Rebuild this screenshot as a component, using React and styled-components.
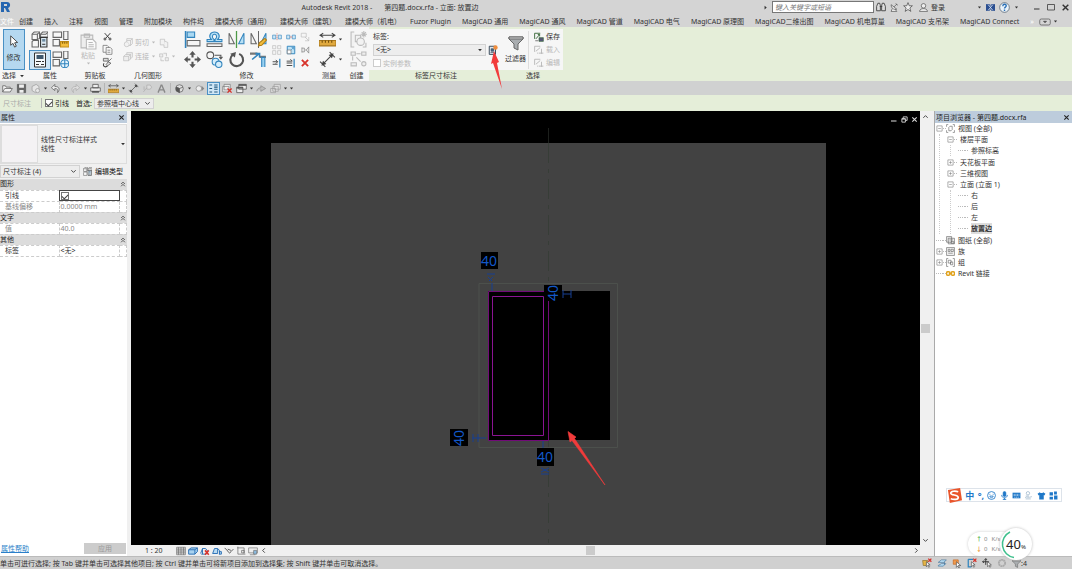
import { useState } from "react";
import styled, { createGlobalStyle } from "styled-components";

const INK = "#555";
const FADE = "#b9b9b9";
const BLUE = "#4a90c4";
const PALE = "#cfe6f6";

// every drawing lives on a 16 x 16 grid
const glyphs = {
  cursor: <path d="M5 2v10l2.4-2 1.8 4 1.8-1-1.8-3.6 3.2-.4z" fill="#fff" stroke="#444" />,
  families: (
    <g fill="#f7f7f7" stroke="#666">
      <path d="M1 3l2-2h5v6l-2 1H1zM9 3l2-2h5v5H9zM1 10l1-1h5v6H1z" />
      <path d="M1 3h5l2-2M6 3v5M9 3h5l2-2" />
      <path d="M9 6h6v9H9z" fill="#dce9f2" stroke="#333" />
      <path d="M10.500 7.500h3v2.500h-3z" fill="#6d8ba1" stroke="none" />
      <path d="M10.500 12.500h3" stroke="#333" />
    </g>
  ),
  typeProps: (
    <g fill="#f7f7f7" stroke="#666">
      <path d="M1 1h8v5H1zM1 8h6v6H1zM11 0h4v8h-4z" />
      <path d="M8 10h8v5H8z" fill="#f3bd3c" stroke="#c18b14" />
      <path d="M10 10v2M12 10v2M14 10v2" stroke="#8b6308" />
    </g>
  ),
  propSheet: (
    <g>
      <path d="M2.500 1h11v14h-11z" fill="#f6fafc" stroke="#333" />
      <path d="M4.500 3h7v4h-7z" fill="#3e586e" />
      <path d="M4 9.500h5M4 12.500h3M10 9.500h2M9 12.500h3" stroke="#333" strokeWidth="1.200" />
    </g>
  ),
  typeGlobe: (
    <g fill="#f7f7f7" stroke="#666">
      <path d="M1 1h8v5H1zM1 8h6v6H1zM11 0h4v7h-4z" />
      <circle cx="12" cy="12" r="3.800" fill="#e4f3fc" stroke="#3184bd" />
      <path d="M12 8v8M8 12h8" stroke="#3184bd" />
    </g>
  ),
  paste: (
    <g fill="#eee" stroke={FADE}>
      <path d="M1 2h11v12H1zM4 1h5v3H4z" />
      <path d="M6 6h6l3 3v6H6z" fill="#fbfbfb" />
      <path d="M8 9h4M8 11h5M8 13h5" />
    </g>
  ),
  cut: (
    <g fill="none" stroke="#333" strokeWidth="1.600">
      <path d="M3 2l8 9M13 2L5 11" />
      <circle cx="3.500" cy="12.500" r="1.800" />
      <circle cx="12.500" cy="12.500" r="1.800" />
    </g>
  ),
  copy: (
    <g fill="#f8f8f8" stroke="#666">
      <path d="M1.500 2h6l2 2v8h-8z" />
      <path d="M6 5h6l2.500 2.500V15H6zM8 9h4M8 12h4" />
    </g>
  ),
  brush: (
    <g fill="#ddd" stroke="#444">
      <path d="M2 2h7v4H2zM9 7l5-5M9 7l-3 4 2 2 5-4z" />
      <path d="M3 9c-3 4 2 7 5 4" fill="none" strokeWidth="1.500" />
    </g>
  ),
  shapeCut: (
    <g fill="#f2f2f2" stroke={FADE}>
      <path d="M6 1h9v8l-3 3H6z" />
      <circle cx="6" cy="10" r="4" />
      <path d="M6 4h6v8M12 4l3-3" />
    </g>
  ),
  shapeJoin: (
    <g fill="#eee" stroke={FADE}>
      <path d="M6 1h9v7l-3 3H6z" />
      <path d="M1 7h8v7H1zM1 7l3-3h8v7l-3 3M9 7l3-3" />
    </g>
  ),
  cope: (
    <g fill="#f2f2f2" stroke={FADE}>
      <path d="M2 2h7v9H2z" />
      <path d="M9 5l5 2v8H8v-4" />
    </g>
  ),
  wallJoin: (
    <g fill="#eee" stroke={FADE}>
      <path d="M1 3h5v5H1zM10 9h5v5h-5zM3 10v4h5M7 2h5v5" />
    </g>
  ),
  align: (
    <g>
      <path d="M1.500 0v16" stroke="#3184bd" strokeWidth="1.500" />
      <path d="M3 1h7v5H3z" fill="#a9d8f2" stroke="#3184bd" />
      <path d="M3 9h12v5H3z" fill="#f4f4f4" stroke="#666" />
    </g>
  ),
  offset: (
    <g fill="#f4f4f4">
      <path d="M1 8h4C2 5 4 1 8 1s6 4 3 7h4v2H8.500V8C11 6 10 3 8 3S5 6 7.500 8v2H1z" stroke="#3184bd" fill="#b8e0f5" />
      <path d="M1 12h14v2.500H1z" stroke="#666" />
    </g>
  ),
  mirrorAxis: (
    <g fill="#f4f4f4" stroke="#666">
      <path d="M1 2l5 10H1z" />
      <path d="M15 2l-5 10h5z" fill="#b8e0f5" stroke="#3184bd" />
      <path d="M8 0v16" stroke="#4d9a47" strokeWidth="1.200" />
    </g>
  ),
  mirrorDraw: (
    <g fill="#f4f4f4" stroke="#666">
      <path d="M1 2l5 10H1z" />
      <path d="M15 2l-5 10h5z" fill="#b8e0f5" stroke="#3184bd" />
      <path d="M8 0v16" />
      <path d="M8 14l1-3 5-4 1.500 1.500-4.500 5z" fill="#f3bd3c" stroke="#b17c10" />
    </g>
  ),
  move: (
    <g fill="#555">
      <path d="M8 0l3 3.500H9V6H7V3.500H5zM8 16l-3-3.500h2V10h2v2.500h2zM0 8l3.500-3v2H6v2H3.500v2zM16 8l-3.500 3V9H10V7h2.500V5z" />
    </g>
  ),
  duplicate: (
    <g fill="none" stroke="#555">
      <circle cx="4" cy="4" r="3.200" />
      <path d="M8 4h6v3M12.500 5.500L14 7.500l1.500-2" />
      <circle cx="9" cy="10" r="3.200" fill="#d6eefb" stroke="#3184bd" />
      <circle cx="12" cy="12.500" r="3" fill="#d6eefb" stroke="#3184bd" />
    </g>
  ),
  rotate: (
    <g>
      <path d="M10.500 2.700A6 6 0 1 1 4.500 3.500" fill="none" stroke="#555" strokeWidth="2" />
      <path d="M2 2.500L7.500 1 6.500 6z" fill="#555" />
    </g>
  ),
  trim: (
    <g fill="none">
      <path d="M0 2.500h7M9 5.500h6" stroke="#777" strokeWidth="2" />
      <path d="M11 15V6h3v9" fill="#9ad1f0" stroke="#3184bd" />
      <path d="M2 8l6-5M5 2.500h4V6" stroke="#3184bd" strokeWidth="1.500" />
    </g>
  ),
  splitElement: (
    <g fill="#cde8f8" stroke="#3184bd">
      <path d="M1 5h5v6H1zM10 5h5v6h-5z" />
      <path d="M8 2v12" stroke="#d0574a" strokeDasharray="2 1" />
    </g>
  ),
  splitGap: (
    <g fill="#cde8f8" stroke="#3184bd">
      <path d="M1 5h5v6H1zM10 5h5v6h-5z" />
      <path d="M6 8h4" stroke="#d0574a" />
    </g>
  ),
  unpin: (
    <g fill="none" stroke={FADE}>
      <path d="M2 2h8v6H2zM8 8l6 6M14 8v6H8" />
    </g>
  ),
  array: (
    <g fill="#f5f5f5" stroke={FADE}>
      <path d="M1 1h5v5H1zM1 9h5v6H1zM9 1h5v5H9zM9 9h5v6H9z" />
    </g>
  ),
  scale: (
    <g>
      <path d="M2 2h12v12H2z" fill="#bfe3f6" stroke="#3184bd" strokeWidth="1.500" />
      <path d="M2 8h6v6H2z" fill="#fff" stroke="#666" />
      <path d="M8 8l4-4M9 4h3v3" fill="none" stroke="#3184bd" />
    </g>
  ),
  pin: <path d="M3 4v8M3 5h4v6H3M8 8h2M14 3l-4 5 4 5z" fill="#eee" stroke="#777" />,
  trimOne: (
    <g fill="none" stroke="#444" strokeWidth="1.500">
      <path d="M1 6h8M1 10h8M6 3l3 3-3 3" />
      <path d="M12.500 1v14" stroke="#3184bd" strokeWidth="2" />
    </g>
  ),
  trimMany: (
    <g fill="none" stroke="#444" strokeWidth="1.500">
      <path d="M1 5h9M1 8h9M1 12h9M7 2l3 3" />
      <path d="M13 1v14" stroke="#3184bd" strokeWidth="2" />
    </g>
  ),
  remove: <path d="M3 3l10 10M13 3L3 13" stroke="#d7332b" strokeWidth="3" />,
  ruler: (
    <g>
      <path d="M1 4h14M4 2L1 4l3 2M12 2l3 2-3 2" fill="none" stroke="#444" />
      <path d="M0 9h16v5H0z" fill="#e0a93e" stroke="#a8771c" />
      <path d="M3 9v2M6 9v2M9 9v2M12 9v2" stroke="#6f4c0a" />
    </g>
  ),
  dimension: (
    <g stroke="#444" fill="none">
      <path d="M3 13L13 3M1 10l5 5M10 1l5 5" />
      <path d="M3 13l1-3 2 2zM13 3l-1 3-2-2z" fill="#444" />
    </g>
  ),
  assembly: (
    <g fill="#f2f2f2" stroke="#bbb">
      <path d="M4 1H1v14h3M12 15h3v-4M5 4h5v6H5z" />
      <circle cx="10" cy="10" r="3.500" />
      <path d="M13 0v6M10 3h6M11 1l4 4M15 1l-4 4" />
    </g>
  ),
  group: (
    <g fill="#eee" stroke="#bbb">
      <path d="M1 1h4v3H1zM11 1h4v3h-4zM1 11h5v3H1zM6 2.500h4M6 6l4 4M2.500 5v4" />
      <circle cx="13" cy="12" r="2" />
    </g>
  ),
  funnel: (
    <g stroke="#666">
      <path d="M1 2h14v2L10 9v6l-4-2V9L1 4z" fill="#a9adb0" />
      <path d="M1 2h14v2H1z" fill="#d7d9da" />
    </g>
  ),
  parameter: (
    <g>
      <path d="M2 2h10v13H2z" fill="#dde6ed" stroke="#345" strokeWidth="1.500" />
      <path d="M5 6h4v4H5zM4 12h6" fill="#476a87" stroke="#345" />
      <circle cx="12" cy="4" r="3.500" fill="#f08d3c" />
    </g>
  ),
  saveSet: (
    <g fill="none" stroke="#3c6b3c">
      <path d="M1 2h9M1 2v9M3 11l6-7M6 4h3v3" strokeWidth="1.500" />
      <path d="M8 9h7v6H8z" fill="#557" />
      <path d="M2 14h5" stroke="#333" />
    </g>
  ),
  loadSet: (
    <g fill="none" stroke={FADE}>
      <path d="M1 2h9M1 2v9M3 10l7-6M12 6v8M8 13h7M5 13h2" strokeWidth="1.500" />
    </g>
  ),
  open: <path d="M1 13V4h4l1 2h6v2M1 13l3-5h11l-3 5z" fill="#f3f3f3" stroke={INK} />,
  save: (
    <g>
      <path d="M2 2h12v12H2z" fill="#666" stroke="#555" />
      <path d="M4.500 2h7v5h-7zM5 10h6v4H5z" fill="#eee" />
    </g>
  ),
  sync: (
    <g fill="#e6e6e6" stroke="#999">
      <path d="M3 5l6-3 4 3v6l-5 3-5-3z" />
      <circle cx="11" cy="11" r="3" />
    </g>
  ),
  undo: <path d="M7 2L2 7l5 4V8c4 0 5 2 4 6 3-3 4-9-4-9z" fill="#eee" stroke={INK} />,
  redo: <path d="M9 2l5 5-5 4V8c-4 0-5 2-4 6-3-3-4-9 4-9z" fill="#ddd" stroke="#aaa" />,
  print: (
    <g fill="#eee" stroke="#444">
      <path d="M4 2h8v5H4zM1 7h14v5H1z" />
      <path d="M3 13h10" strokeWidth="2" />
    </g>
  ),
  tag: <path d="M2 13l5-6M7 3h5l2 3-2 3H7zM3 5v5" fill="#ddd" stroke="#aaa" />,
  letter: <path d="M3 14L7.500 3h1L13 14M5 10h6" fill="none" stroke="#888" strokeWidth="2" />,
  cube: (
    <g stroke="#555">
      <circle cx="8" cy="8" r="5.500" fill="#ddd" />
      <path d="M8 8V14l-5-3V6z" fill="#555" />
      <path d="M3 6l5 2 5-2" fill="none" />
    </g>
  ),
  section: (
    <g>
      <circle cx="7" cy="8" r="4" fill="#eee" stroke="#888" />
      <path d="M11 4l4 4-4 4z" fill="#888" />
    </g>
  ),
  thinLines: (
    <path d="M2 3h4M2 8h4M2 13h4M9 3h5M9 6h5M9 9h5M9 13h5" stroke="#23587f" strokeWidth="1.500" />
  ),
  closeHidden: (
    <g fill="#eee" stroke="#777">
      <path d="M3 2h9v8H3zM1 5h9v8H1z" />
      <path d="M8 8l6 6M14 8l-6 6" stroke="#d7332b" strokeWidth="2" />
    </g>
  ),
  windows: (
    <g fill="#eee" stroke="#444">
      <path d="M4 2h11v7H4zM1 6h9v8H1z" />
      <path d="M1 7h9M4 3h11" strokeWidth="2" />
    </g>
  ),
  arrowLeft: <path d="M1 12c1-4 3-5 6-5V4l7 4-7 4V9" fill="#bbb" stroke="#888" />,
  cascade: <path d="M6 2h9v7H6zM4 5h8v7H4zM1 8h7v6H1z" fill="#ddd" stroke="#999" />,
  binoculars: (
    <g fill="#ddd" stroke="#333" strokeWidth="1.300">
      <path d="M3 2h3l1 4v8H1V7zM10 2h3l2 5v7H9V6zM6 7h4" />
    </g>
  ),
  satellite: (
    <g fill="#eee" stroke="#333">
      <path d="M2 3c0 7 5 9 10 8zM7 7l5-5M10 1l4 3M4 10l-2 5h10l-3-4" />
    </g>
  ),
  star: <path d="M8 1l2 5h5l-4 3.500 1.500 5.500L8 12l-4.500 3L5 9.500 1 6h5z" fill="#eee" stroke="#333" />,
  person: (
    <g fill="#eee" stroke="#333">
      <circle cx="8" cy="5" r="4" />
      <path d="M1 15c0-4 4-5 7-5s7 1 7 5z" />
    </g>
  ),
  exchange: (
    <g>
      <path d="M0 2h16v12H0z" fill="#2b4f91" />
      <path d="M4 3l8 10M12 3L4 13" stroke="#dfeaf6" strokeWidth="1.500" />
      <path d="M6 2h4l-2 3zM6 14h4l-2-3z" fill="#d4d4d4" />
    </g>
  ),
  help: (
    <g>
      <circle cx="8" cy="8" r="7" fill="#eaf3fa" stroke="#456" />
      <path d="M5.500 6c0-3.500 5-3.500 5-.5C10.500 7.500 8 7.500 8 9.500M8 11v2" fill="none" stroke="#2a6fb5" strokeWidth="2" />
    </g>
  ),
  minimize: <path d="M2 12h11" stroke="currentColor" strokeWidth="2" />,
  maximize: <path d="M1 3h14v11H1z" fill="none" stroke="currentColor" strokeWidth="1.500" />,
  restore: <path d="M5 6V2h9v8h-4M2 6h8v8H2zM2 7h8" fill="none" stroke="currentColor" strokeWidth="2" />,
  close: <path d="M3 3l10 10M13 3L3 13" stroke="currentColor" strokeWidth="2.500" />,
  caret: <path d="M3 5h10l-5 6z" fill="currentColor" />,
  caretRight: <path d="M5 2v12l7-6z" fill="currentColor" />,
  chevDown: <path d="M3 5l5 5 5-5" fill="none" stroke="currentColor" strokeWidth="2" />,
  chevUp: <path d="M3 11l5-5 5 5" fill="none" stroke="currentColor" strokeWidth="2" />,
  chevLeft: <path d="M11 3L6 8l5 5" fill="none" stroke="currentColor" strokeWidth="2" />,
  chevRight: <path d="M5 3l5 5-5 5" fill="none" stroke="currentColor" strokeWidth="2" />,
  collapse: <path d="M3 8l5-5 5 5M3 14l5-5 5 5" fill="none" stroke="#333" strokeWidth="2" />,
  panelBox: (
    <g fill="none" stroke="#555">
      <rect x="1" y="4" width="14" height="8" rx="2" />
      <path d="M6 7h4l-2 2z" fill="#333" />
    </g>
  ),
  minusBox: <path d="M2 2h12v12H2zM5 8h6" fill="#fff" stroke="#888" strokeWidth="1.500" />,
  plusBox: <path d="M2 2h12v12H2zM5 8h6M8 5v6" fill="#fff" stroke="#888" strokeWidth="1.500" />,
  viewsRoot: (
    <g fill="none" stroke="#555">
      <path d="M4 1H1v4M12 1h3v4M4 15H1v-4M12 15h3v-4M5 6l2-2h4v6l-2 2H5z" />
    </g>
  ),
  sheets: <path d="M1 1h9v10H1zM4 4h11v10H4zM6 7h6M9 10h5v3H9z" fill="#eee" stroke="#555" />,
  family: <path d="M1 1h14v14H1zM4 4h3v4H4zM9 4h4v4H9zM4 11h8" fill="#f4f4f4" stroke="#555" />,
  groups: <path d="M4 1H1v14h3M12 1h3v14h-3M4 4h5v5H4zM8 7h4v5H8z" fill="none" stroke="#555" />,
  link: (
    <g fill="#fff" stroke="#e0a21c" strokeWidth="2.500">
      <rect x="1" y="5" width="6" height="6" rx="2" />
      <rect x="9" y="5" width="6" height="6" rx="2" />
      <path d="M5 8h6" />
    </g>
  ),
  detail: <path d="M1 2h14v12H1zM1 5h14M1 8h14M1 11h14M4 2v12M8 2v12M12 2v12" fill="#ddd" stroke="#666" />,
  blueBox: <path d="M1 6l4-3h10v6l-4 4H1zM1 6h10v7M11 6l4-3" fill="#a9d2ef" stroke="#2a6fb5" strokeWidth="1.500" />,
  sunOff: (
    <g fill="none" stroke="#2a6fb5" strokeWidth="1.500">
      <path d="M1 12l3-8h5l3 4M2 13h8M4 4v9" />
      <path d="M8 7l6 7M14 7l-6 7" stroke="#d7332b" strokeWidth="2.500" />
    </g>
  ),
  shadow: <path d="M1 12l3-8h5v8H1M9 4l3 3v6M12 9h3v4h-4" fill="#b9dbf2" stroke="#2a6fb5" strokeWidth="1.500" />,
  glasses: <path d="M1 3l5 5c2 4 4 4 5 1l4-4M6 5l5 2" fill="none" stroke="#555" strokeWidth="1.500" />,
  crop: <path d="M2 3h11v9M3 1v12h12M9 7h4v4H9z" fill="none" stroke="#555" />,
  monitor: (
    <g fill="#eee" stroke="#666">
      <path d="M1 3h14v8H1zM3 14h9" />
      <path d="M9 7h5v6H9z" fill="#8bbbe0" />
    </g>
  ),
  selLinks: (
    <g>
      <path d="M1 4h8l-2 8H2z" fill="#e5b548" stroke="#8a6a1e" />
      <path d="M7 6v8l2-2 2 3 1-1-2-3h3z" fill="#fff" stroke="#444" />
      <path d="M10 1l5 5M15 1l-5 5" stroke="#d7332b" strokeWidth="2" />
    </g>
  ),
  selUnder: <path d="M2 7l5-4h8l-4 4zM2 12l5-3h7l-4 4H2zM12 6v5" fill="#b9def4" stroke="#3d6f97" />,
  selPinned: (
    <g>
      <path d="M2 3h8v7H2z" fill="#f09a4d" stroke="#c26118" />
      <path d="M7 6v9l2-2 2 3 1-1-2-3h4z" fill="#fff" stroke="#444" />
    </g>
  ),
  selFace: (
    <g>
      <path d="M2 2h8M2 2v12h5" fill="none" stroke="#3184bd" strokeWidth="2" />
      <path d="M7 6v8l2-2 2 3 1-1-2-3h3z" fill="#fff" stroke="#444" />
      <path d="M10 1l5 5M15 1l-5 5" stroke="#d7332b" strokeWidth="2" />
    </g>
  ),
  drag: (
    <g>
      <path d="M6 1v10M1 6h10M4 3l2-2 2 2M3 4L1 6l2 2" fill="none" stroke="#333" strokeWidth="1.500" />
      <path d="M9 6v8l2-2 2 3 1-1-2-3h3z" fill="#fff" stroke="#444" />
    </g>
  ),
  gear: <circle cx="8" cy="8" r="5" fill="none" stroke="#aaa" strokeWidth="3" strokeDasharray="3 .6" />,
  smile: (
    <g fill="none" stroke="#1f78c8" strokeWidth="1.500">
      <circle cx="8" cy="8" r="7" />
      <path d="M5 9c1 4 5 4 6 0zM5 5v1.500M11 5v1.500" />
    </g>
  ),
  mic: (
    <g fill="#1f78c8" stroke="#1f78c8">
      <rect x="5.500" y="1" width="5" height="9" rx="2.500" />
      <path d="M3 7c0 7 10 7 10 0M8 12v3M5 15h6" fill="none" strokeWidth="1.500" />
    </g>
  ),
  keyboard: (
    <g>
      <rect x="1" y="3" width="14" height="10" fill="#1f78c8" />
      <path d="M3 6h10M3 8h10M4 11h8" stroke="#fff" strokeDasharray="2 1" />
    </g>
  ),
  hand: (
    <g fill="none" stroke="#a6bccf" strokeWidth="1.500">
      <circle cx="7" cy="4" r="3" />
      <path d="M3 9h6M2 12c3-3 6 1 12-2M3 14h9" />
    </g>
  ),
  shirt: <path d="M5 2c1 2 5 2 6 0l4 3-2 3-1-1v8H4V7L3 8 1 5z" fill="#1f78c8" />,
  grid: <path d="M1 2h6v6H1zM9 1h5v5H9zM1 10h6v5H1zM9 8h6v7H9z" fill="#1f78c8" />,
};

const Svg = styled.svg`
  display: block;
  flex: none;
  width: ${(p) => p.$size}px;
  height: ${(p) => p.$size}px;
`;

const Glyph = ({ name, size = 11 }) => (
  <Svg viewBox="0 0 16 16" $size={size} aria-hidden="true">
    {glyphs[name]}
  </Svg>
);

const tabs = [
  "创建", "插入", "注释", "视图", "管理", "附加模块", "构件坞",
  "建模大师（通用）", "建模大师（建筑）", "建模大师（机电）", "Fuzor Plugin",
  "MagiCAD 通用", "MagiCAD 通风", "MagiCAD 管道", "MagiCAD 电气", "MagiCAD 原理图",
  "MagiCAD二维出图", "MagiCAD 机电算量", "MagiCAD 支吊架", "MagiCAD Connect",
];

const bigModify = ["align", "offset", "mirrorAxis", "mirrorDraw", "move", "duplicate", "rotate", "trim"];
const smallModify = ["splitElement", "splitGap", "unpin", "array", "scale", "pin", "trimOne", "trimMany", "remove"];

const quick = [
  "open", "save", "sync", "caret", "undo", "caret", "redo", "caret", "print", "|",
  "ruler", "caret", "dimension", "tag", "letter", "|", "cube", "caret", "section",
  "thinLines", "closeHidden", "windows", "caret", "arrowLeft", "cascade", "caret", "caret",
];

const properties = [
  { group: "图形" },
  { name: "引线", check: true },
  { name: "基线偏移", value: "0.0000 mm", faded: true },
  { group: "文字" },
  { name: "值", value: "40.0", faded: true },
  { group: "其他" },
  { name: "标签", value: "<无>" },
];

const tree = [
  {
    label: "视图 (全部)", icon: "viewsRoot", box: "minusBox",
    children: [
      { label: "楼层平面", box: "minusBox", children: [{ label: "参照标高" }] },
      { label: "天花板平面", box: "plusBox" },
      { label: "三维视图", box: "plusBox" },
      {
        label: "立面 (立面 1)", box: "minusBox",
        children: [{ label: "右" }, { label: "后" }, { label: "左" }, { label: "放置边", active: true }],
      },
    ],
  },
  { label: "图纸 (全部)", icon: "sheets" },
  { label: "族", icon: "family", box: "plusBox" },
  { label: "组", icon: "groups", box: "plusBox" },
  { label: "Revit 链接", icon: "link" },
];

const TreeNode = ({ node }) => (
  <li>
    <TreeRow>
      {node.box ? <Glyph name={node.box} size={7} /> : <Dash />}
      <Dash $short />
      {node.icon && <Glyph name={node.icon} size={9} />}
      <TreeLabel $active={node.active}>{node.label}</TreeLabel>
    </TreeRow>
    {node.children && (
      <TreeList $nested $deep={!node.icon}>
        {node.children.map((child) => (
          <TreeNode key={child.label} node={child} />
        ))}
      </TreeList>
    )}
  </li>
);

const Drawing = () => (
  <Scene viewBox="0 0 789 434" role="img" aria-label="立面: 放置边">
    <rect x="140" y="32" width="555" height="402" fill="#424242" />
    <path d="M417.500 17v15" stroke="#1c1f1c" />
    <path d="M417.500 32v400" stroke="#373d37" strokeDasharray="20 6 4 6" />
    <path d="M348 172.500h138.500v164H348z" fill="none" stroke="#4c504c" />
    <rect x="357" y="180" width="122" height="149" fill="#000" />
    <path d="M357.500 180.500h60v149h-60z" fill="none" stroke="#720b78" />
    <path d="M361.500 185.500h51v139h-51z" fill="none" stroke="#8a1492" />
    <g fill="none" stroke="#173f91">
      <path d="M356 163h8M357 166l4 4M362 166l-4 4M361 172v8" />
      <path d="M432 183h8M432 179v8M440 179v8" />
      <path d="M341 327h14M342 323v8M347 323v8" />
      <path d="M412 330v8M410 357l8 4M418 357l-8 4M410 363h8" />
    </g>
    <g fill="#000">
      <path d="M350 141h17v17h-17zM413 174h18v16h-18zM319 318h18v17h-18zM406 337h17v18h-17z" />
    </g>
    <DimText x="358" y="155">40</DimText>
    <DimText x="414" y="351">40</DimText>
    <DimText transform="translate(427 182) rotate(-90)">40</DimText>
    <DimText transform="translate(333 327) rotate(-90)">40</DimText>
    <path d="M437 320.500l8 5.500-1.500 1.500L474 374l-33-44.500-2 1.500z" fill="#f23b3b" stroke="#f23b3b" strokeWidth=".6" />
  </Scene>
);

export default function App() {
  const [leader, setLeader] = useState(true);
  const toggle = () => setLeader(!leader);

  return (
    <Window>
      <GlobalStyle />
      <TitleBar>
        <Logo viewBox="0 0 11 12" aria-label="Revit">
          <path d="M1 1h6c4 0 4 5 1 6l2 4H7L5 7H4v4H1z" fill="#2565b0" />
          <path d="M4 3h3v2H4z" fill="#d4d4d4" />
        </Logo>
        <Title>
          <span>Autodesk Revit 2018 -</span>
          <span>第四题.docx.rfa - 立面: 放置边</span>
        </Title>
        <TitleTools>
          <Glyph name="caretRight" size={5} />
          <Search aria-label="搜索" placeholder="键入关键字或短语" />
          <Glyph name="binoculars" size={10} />
          <Glyph name="satellite" size={9} />
          <Glyph name="star" size={10} />
          <Account>
            <Glyph name="person" size={9} />
            登录
          </Account>
          <Glyph name="caret" size={5} />
          <Glyph name="exchange" size={9} />
          <Glyph name="help" size={11} />
          <Glyph name="caret" size={5} />
        </TitleTools>
        <WindowButtons>
          <IconButton aria-label="最小化"><Glyph name="minimize" size={8} /></IconButton>
          <IconButton aria-label="最大化"><Glyph name="maximize" size={8} /></IconButton>
          <IconButton aria-label="关闭"><Glyph name="close" size={9} /></IconButton>
        </WindowButtons>
      </TitleBar>

      <Tabs>
        <FileTab>文件</FileTab>
        {tabs.map((tab) => (
          <Tab key={tab} $paren={tab.endsWith("）")}>{tab}</Tab>
        ))}
        <FileTab>»</FileTab>
        <IconButton aria-label="面板显示"><Glyph name="panelBox" size={12} /></IconButton>
        <Glyph name="caret" size={5} />
      </Tabs>

      <Ribbon>
        <Panel $width={27}>
          <PanelBody>
            <ModifyButton>
              <Glyph name="cursor" size={15} />
              修改
            </ModifyButton>
          </PanelBody>
          <PanelName>选择 <Glyph name="caret" size={6} /></PanelName>
        </Panel>
        <Panel $width={46}>
          <PanelBody>
            <IconGrid $cols={2} $cell={21} $row={20}>
              <Glyph name="families" size={17} />
              <Glyph name="typeProps" size={17} />
              <Pressed><Glyph name="propSheet" size={16} /></Pressed>
              <Glyph name="typeGlobe" size={17} />
            </IconGrid>
          </PanelBody>
          <PanelName>属性</PanelName>
        </Panel>
        <Panel $width={44}>
          <PanelBody>
            <PasteButton disabled>
              <Glyph name="paste" size={17} />
              粘贴
              <Glyph name="caret" size={5} />
            </PasteButton>
            <IconGrid $cols={1} $cell={14} $row={13}>
              <Glyph name="cut" size={9} />
              <Glyph name="copy" />
              <Glyph name="brush" />
            </IconGrid>
          </PanelBody>
          <PanelName>剪贴板</PanelName>
        </Panel>
        <Panel $width={62}>
          <PanelBody $faded>
            <Stack $wide>
              <SmallButton disabled><Glyph name="shapeCut" size={10} />剪切<Glyph name="caret" size={5} /></SmallButton>
              <SmallButton disabled><Glyph name="shapeJoin" size={10} />连接<Glyph name="caret" size={5} /></SmallButton>
            </Stack>
            <Stack $wide>
              <SmallButton disabled><Glyph name="cope" size={10} /></SmallButton>
              <SmallButton disabled><Glyph name="wallJoin" size={10} /><Glyph name="caret" size={5} /></SmallButton>
            </Stack>
          </PanelBody>
          <PanelName>几何图形</PanelName>
        </Panel>
        <Panel $width={135}>
          <PanelBody>
            <IconGrid $cols={4} $cell={22} $row={20}>
              {bigModify.map((name) => (
                <Glyph key={name} name={name} size={17} />
              ))}
            </IconGrid>
            <IconGrid $cols={3} $cell={14} $row={13}>
              {smallModify.map((name) => (
                <Glyph key={name} name={name} size={10} />
              ))}
            </IconGrid>
          </PanelBody>
          <PanelName>修改</PanelName>
        </Panel>
        <Panel $width={30}>
          <PanelBody>
            <Stack>
              <SmallButton><Glyph name="ruler" size={17} /><Glyph name="caret" size={5} /></SmallButton>
              <SmallButton><Glyph name="dimension" size={17} /><Glyph name="caret" size={5} /></SmallButton>
            </Stack>
          </PanelBody>
          <PanelName>测量</PanelName>
        </Panel>
        <Panel $width={25}>
          <PanelBody>
            <Stack>
              <Glyph name="assembly" size={17} />
              <Glyph name="group" size={17} />
            </Stack>
          </PanelBody>
          <PanelName>创建</PanelName>
        </Panel>
        <Panel $width={134} $context>
          <PanelBody>
            <LabelForm>
              <label htmlFor="dim-label">标签:</label>
              <LabelSelect>
                <SelectWrap $width={113} $height={12}>
                  <select id="dim-label"><option>&lt;无&gt;</option></select>
                  <Glyph name="caret" size={6} />
                </SelectWrap>
                <IconButton aria-label="创建参数"><Glyph name="parameter" size={10} /></IconButton>
              </LabelSelect>
              <CheckLabel $faded>
                <Check type="checkbox" disabled />
                实例参数
              </CheckLabel>
            </LabelForm>
          </PanelBody>
          <PanelName>标签尺寸标注</PanelName>
          <Pointer viewBox="0 0 14 40" aria-hidden="true">
            <path d="M3 0l5 11-2 1 5 26L2 12l-2 1z" fill="#f23b3b" />
          </Pointer>
        </Panel>
        <Panel $width={60} $context>
          <PanelBody $start>
            <FilterButton>
              <Glyph name="funnel" size={16} />
              过滤器
            </FilterButton>
            <SetList>
              <SmallButton><Glyph name="saveSet" size={10} />保存</SmallButton>
              <SmallButton disabled><Glyph name="loadSet" size={10} />载入</SmallButton>
              <SmallButton disabled><Glyph name="loadSet" size={10} />编辑</SmallButton>
            </SetList>
          </PanelBody>
          <PanelName>选择</PanelName>
        </Panel>
      </Ribbon>

      <QuickBar>
        {quick.map((name, i) =>
          name === "|" ? (
            <Divider key={i} />
          ) : (
            <QuickButton key={i} aria-label={name} $small={name === "caret"} $on={name === "thinLines"}>
              <Glyph name={name} size={name === "caret" ? 5 : 11} />
            </QuickButton>
          )
        )}
      </QuickBar>

      <OptionsBar>
        <Muted>尺寸标注</Muted>
        <Divider $wide />
        <CheckLabel>
          <Check type="checkbox" checked={leader} onChange={toggle} />
          引线
        </CheckLabel>
        <Prefer htmlFor="prefer">首选:</Prefer>
        <SelectWrap $width={60} $height={11}>
          <select id="prefer"><option>参照墙中心线</option></select>
          <Glyph name="chevDown" size={7} />
        </SelectWrap>
      </OptionsBar>

      <Main>
        <Properties>
          <DockTitle>
            属性
            <IconButton aria-label="关闭属性"><Glyph name="close" size={7} /></IconButton>
          </DockTitle>
          <TypePicker>
            <Preview />
            <TypeName>线性尺寸标注样式<br />线性</TypeName>
            <Glyph name="caret" size={6} />
          </TypePicker>
          <FilterRow>
            <SelectWrap $width={80} $height={13}>
              <select aria-label="类别"><option>尺寸标注 (4)</option></select>
              <Glyph name="chevDown" size={7} />
            </SelectWrap>
            <EditType><Glyph name="families" size={9} />编辑类型</EditType>
          </FilterRow>
          <Table>
            <colgroup>
              <col width="59" />
              <col />
              <col width="7" />
            </colgroup>
            <tbody>
              {properties.map((row) =>
                row.group ? (
                  <GroupRow key={row.group}>
                    <th colSpan="2">{row.group}</th>
                    <td><Glyph name="collapse" size={6} /></td>
                  </GroupRow>
                ) : (
                  <ValueRow key={row.name} $faded={row.faded} $focus={row.check}>
                    <th scope="row">{row.name}</th>
                    <td>
                      {row.check ? (
                        <Check type="checkbox" aria-label={row.name} checked={leader} onChange={toggle} />
                      ) : (
                        row.value
                      )}
                    </td>
                    <td />
                  </ValueRow>
                )
              )}
            </tbody>
          </Table>
          <PropFooter>
            <a href="#help">属性帮助</a>
            <Apply disabled>应用</Apply>
          </PropFooter>
        </Properties>

        <View>
          <Canvas>
            <Drawing />
            <ViewButtons>
              <IconButton aria-label="最小化视图"><Glyph name="minimize" size={8} /></IconButton>
              <IconButton aria-label="还原视图"><Glyph name="restore" size={7} /></IconButton>
              <IconButton aria-label="关闭视图"><Glyph name="close" size={7} /></IconButton>
            </ViewButtons>
          </Canvas>
          <VScroll>
            <Glyph name="chevUp" size={7} />
            <Thumb />
            <Glyph name="chevDown" size={7} />
          </VScroll>
          <ViewBar>
            <Scale>1 : 20</Scale>
            {["detail", "blueBox", "sunOff", "shadow", "glasses", "crop", "monitor"].map((name) => (
              <IconButton key={name} aria-label={name}><Glyph name={name} size={10} /></IconButton>
            ))}
            <HScroll>
              <Glyph name="chevLeft" size={7} />
              <Thumb />
              <Glyph name="chevRight" size={7} />
            </HScroll>
          </ViewBar>
          <Corner />
        </View>

        <Browser>
          <DockTitle>
            项目浏览器 - 第四题.docx.rfa
            <IconButton aria-label="关闭浏览器"><Glyph name="close" size={7} /></IconButton>
          </DockTitle>
          <TreeList>
            {tree.map((node) => (
              <TreeNode key={node.label} node={node} />
            ))}
          </TreeList>
        </Browser>
      </Main>

      <StatusBar>
        <span>单击可进行选择; 按 Tab 键并单击可选择其他项目; 按 Ctrl 键并单击可将新项目添加到选择集; 按 Shift 键并单击可取消选择。</span>
        <StatusIcons>
          {["selLinks", "selUnder", "selPinned", "selFace", "drag", "gear"].map((name) => (
            <Glyph key={name} name={name} size={10} />
          ))}
          <Count><Glyph name="funnel" size={9} />:4</Count>
        </StatusIcons>
      </StatusBar>

      <ImeBar>
        <ImeLogo viewBox="0 0 16 16" aria-label="S">
          <path d="M1 2l13-2 2 13-13 3z" fill="#e9552b" />
          <path d="M12 4c-3-1-8-1-8 1.500C4 8 12 7 12 10c0 2.500-5 2.500-8 1.500" fill="none" stroke="#fff" strokeWidth="1.800" />
        </ImeLogo>
        <span>中</span>
        <span>°,</span>
        {["smile", "mic", "keyboard", "hand", "shirt", "grid"].map((name) => (
          <Glyph key={name} name={name} size={9} />
        ))}
      </ImeBar>

      <Meter>
        <Rates>
          <Rate $color="#5cb85c"><b>↑</b>0<i>K/s</i></Rate>
          <Rate $color="#e8973a"><b>↓</b>0<i>K/s</i></Rate>
        </Rates>
        <Dial>
          <DialRing viewBox="0 0 32 32" aria-hidden="true">
            <path d="M10 4a13.500 13.500 0 0 0 4 25.500" fill="none" stroke="#3fc08d" strokeWidth="1.500" />
          </DialRing>
          40<small>%</small>
        </Dial>
      </Meter>
    </Window>
  );
}

const GlobalStyle = createGlobalStyle`
  * {
    box-sizing: border-box;
  }
  body {
    margin: 0;
    overflow: hidden;
    color: #333;
    font: 7px/11px "Noto Sans", "Noto Sans CJK SC", sans-serif;
  }
  button, input, select {
    margin: 0;
    padding: 0;
    border: 0;
    border-radius: 0;
    background: none;
    color: inherit;
    font: inherit;
  }
`;

const Window = styled.div`
  position: relative;
  display: flex;
  flex-direction: column;
  height: 100vh;
  background: #f0f0f0;
`;

const TitleBar = styled.header`
  display: flex;
  align-items: center;
  height: 14px;
  background: #d4d4d4;
`;

const Logo = styled.svg`
  width: 11px;
  height: 12px;
`;

const Title = styled.div`
  display: flex;
  flex: 1;
  gap: 12px;
  justify-content: center;
  padding-left: 6px;
  white-space: nowrap;
`;

const TitleTools = styled.div`
  display: flex;
  align-items: center;
  gap: 4px;
`;

const Search = styled.input`
  width: 102px;
  height: 12px;
  margin-right: -2px;
  border: 1px solid #777;
  background: #fff;
  font-style: italic;
  padding-left: 2px;

  &::placeholder {
    color: #777;
  }
`;

const Account = styled.button`
  display: flex;
  align-items: center;
  gap: 3px;
  margin: 0 28px 0 2px;
`;

const WindowButtons = styled.div`
  display: flex;
  gap: 6px;
  padding: 0 2px 0 14px;
`;

const IconButton = styled.button`
  display: flex;
  align-items: center;
  justify-content: center;
`;

const Tabs = styled.nav`
  display: flex;
  align-items: center;
  gap: 11px;
  height: 13px;
  padding-top: 2px;
  background: #d4d4d4;
  white-space: nowrap;

  & > svg {
    margin-left: -9px;
  }
`;

const Tab = styled.button`
  margin-right: ${(p) => (p.$paren ? -2 : 0)}px;
  color: #333;
  white-space: nowrap;
`;

const FileTab = styled(Tab)`
  color: #fff;
  margin-right: -6px;
`;

const Ribbon = styled.section`
  display: flex;
  height: 54px;
  background: #e5eed9;
`;

const Panel = styled.div`
  position: relative;
  display: flex;
  flex: none;
  flex-direction: column;
  width: ${(p) => p.$width}px;
  background: ${(p) => (p.$context ? "#e5eed9" : "#f6f6f6")};
  padding-top: 2px;

  & > :first-child {
    background: #f6f6f6;
  }
`;

const PanelBody = styled.div`
  display: flex;
  align-items: center;
  justify-content: ${(p) => (p.$start ? "flex-start" : "center")};
  height: 41px;
  color: ${(p) => (p.$faded ? FADE : "#333")};
`;

const PanelName = styled.div`
  display: flex;
  align-items: center;
  justify-content: center;
  gap: 3px;
  height: 11px;
`;

const ModifyButton = styled.button`
  display: flex;
  flex-direction: column;
  align-items: center;
  gap: 3px;
  width: 22px;
  height: 41px;
  padding-top: 4px;
  border: 1px solid ${BLUE};
  background: #b5d8f0;
`;

const IconGrid = styled.div`
  display: grid;
  grid-template-columns: repeat(${(p) => p.$cols}, ${(p) => p.$cell}px);
  grid-auto-rows: ${(p) => p.$row}px;
  place-items: center;
`;

const Pressed = styled.div`
  padding: 1px 2px;
  border: 1px solid ${BLUE};
  background: ${PALE};
`;

const PasteButton = styled.button`
  display: flex;
  flex-direction: column;
  align-items: center;
  width: 24px;
  color: ${FADE};
`;

const Stack = styled.div`
  display: flex;
  flex-direction: column;
  gap: ${(p) => (p.$wide ? 2 : 3)}px;
  margin-left: 3px;
`;

const SmallButton = styled.button`
  display: flex;
  align-items: center;
  gap: 2px;
  min-height: 12px;
  white-space: nowrap;
  color: ${(p) => (p.disabled ? FADE : "#333")};
`;

const LabelForm = styled.div`
  display: flex;
  flex-direction: column;
  gap: 2px;
  width: 126px;
`;

const LabelSelect = styled.div`
  display: flex;
  gap: 2px;
`;

const SelectWrap = styled.div`
  display: flex;
  flex: none;
  align-items: center;
  width: ${(p) => p.$width}px;
  height: ${(p) => p.$height}px;
  padding: 0 2px;
  border: 1px solid #d2d2d2;
  background: #ededed;

  select {
    flex: 1;
    min-width: 0;
    appearance: none;
    outline: none;
  }
`;

const CheckLabel = styled.label`
  display: flex;
  align-items: center;
  gap: 2px;
  color: ${(p) => (p.$faded ? FADE : "#222")};
`;

const Check = styled.input`
  appearance: none;
  display: grid;
  place-items: center;
  width: 8px;
  height: 8px;
  border: 1px solid ${(p) => (p.disabled ? "#ccc" : "#777")};
  background: #fff;

  &:checked::before {
    content: "";
    width: 5px;
    height: 3px;
    border: solid #444;
    border-width: 0 0 1px 1px;
    transform: rotate(-45deg);
  }
`;

// red marker lying over the parameter button
const Pointer = styled.svg`
  position: absolute;
  left: 122px;
  top: 24px;
  width: 14px;
  height: 40px;
  z-index: 2;
`;

const FilterButton = styled.button`
  display: flex;
  flex-direction: column;
  align-items: center;
  gap: 2px;
  width: 25px;
`;

const SetList = styled.div`
  display: flex;
  flex-direction: column;
  gap: 1px;
  padding-left: 5px;
  border-left: 1px solid #ddd;
`;

const QuickBar = styled.div`
  display: flex;
  align-items: center;
  gap: 1px;
  height: 14px;
  padding-left: 1px;
  background: #d0d1d1;
`;

const QuickButton = styled.button`
  display: flex;
  align-items: center;
  justify-content: center;
  width: ${(p) => (p.$small ? 5 : 13)}px;
  height: 13px;
  border: ${(p) => (p.$on ? `1px solid ${BLUE}` : "0")};
  background: ${(p) => (p.$on ? PALE : "none")};
`;

const Divider = styled.span`
  width: 1px;
  height: 10px;
  margin: 0 ${(p) => (p.$wide ? 3 : 1)}px;
  background: #b5b5b5;
`;

const OptionsBar = styled.div`
  display: flex;
  align-items: center;
  height: 16px;
  padding-left: 3px;
  background: #e5eed9;
`;

const Muted = styled.span`
  width: 35px;
  color: #aaa;
`;

const Prefer = styled.label`
  margin: 0 2px 0 7px;
  color: #222;
`;

const Main = styled.main`
  display: flex;
  flex: 1;
  min-height: 0;
`;

const Properties = styled.aside`
  display: flex;
  flex: none;
  flex-direction: column;
  width: 127px;
  background: #fff;
`;

const DockTitle = styled.div`
  display: flex;
  align-items: center;
  justify-content: space-between;
  height: 12px;
  padding: 0 2px 0 1px;
  background: #bdccdc;
  color: #222;
`;

const TypePicker = styled.div`
  display: flex;
  align-items: center;
  height: 40px;
  margin-top: 1px;
  border: 1px solid #ddd;
  background: #f0f0f0;
`;

const Preview = styled.div`
  width: 37px;
  height: 38px;
  border: 1px solid #ddd;
  background: #f4f2f4;
`;

const TypeName = styled.p`
  flex: 1;
  margin: 0 0 0 3px;
  line-height: 9px;
`;

const FilterRow = styled.div`
  display: flex;
  align-items: center;
  height: 15px;
  background: #f0f0f0;
`;

const EditType = styled.button`
  display: flex;
  align-items: center;
  gap: 3px;
  margin-left: 3px;
  color: #111;
`;

const Table = styled.table`
  width: 100%;
  border-collapse: collapse;
  table-layout: fixed;

  tr {
    height: 11px;
  }
  th,
  td {
    height: 11px;
    padding: 0;
    line-height: 10px;
    text-align: left;
    font-weight: 400;
  }
`;

const GroupRow = styled.tr`
  background: #dcdcdc;
  color: #222;
`;

const ValueRow = styled.tr`
  color: ${(p) => (p.$faded ? "#888" : "#333")};

  th,
  td {
    border: 1px dashed #ccc;
  }
  th {
    border-left: 0;
    padding-left: 5px;
  }
  td:nth-child(2) {
    padding-left: 1px;
    outline: ${(p) => (p.$focus ? "1px solid #444" : "none")};
    outline-offset: -1px;
  }
`;

const PropFooter = styled.footer`
  display: flex;
  align-items: center;
  justify-content: space-between;
  margin-top: auto;
  height: 15px;
  padding: 0 1px;

  a {
    color: #2a7fc9;
  }
`;

const Apply = styled.button`
  width: 42px;
  height: 11px;
  background: #ccc;
  color: #999;
`;

const View = styled.section`
  display: grid;
  flex: 1;
  grid-template: 1fr 11px / 1fr 11px;
  min-width: 0;
  margin: 0 3px 0 4px;
`;

const Canvas = styled.div`
  position: relative;
  min-height: 0;
  background: #000;
`;

const Scene = styled.svg`
  display: block;
  width: 100%;
  height: 100%;
`;

const DimText = styled.text`
  fill: #1358c8;
  font-size: 14px;
  text-anchor: middle;
`;

const ViewButtons = styled.div`
  position: absolute;
  top: 4px;
  right: 2px;
  display: flex;
  gap: 3px;
  color: #ddd;
`;

const VScroll = styled.div`
  display: flex;
  flex-direction: column;
  align-items: center;
  justify-content: space-between;
  padding: 2px 0 1px;
`;

const Thumb = styled.span`
  width: 9px;
  height: 9px;
  background: #cbcbcb;
`;

const ViewBar = styled.div`
  display: flex;
  align-items: center;
  gap: 2px;
`;

const Scale = styled.span`
  width: 43px;
  padding-left: 14px;
`;

const HScroll = styled.div`
  display: flex;
  flex: 1;
  align-items: center;
  justify-content: space-between;
`;

const Corner = styled.span`
  background: #f0f0f0;
`;

const Browser = styled.aside`
  flex: none;
  width: 138px;
  border-left: 1px solid #aaa;
  background: #fff;
`;

const TreeList = styled.ul`
  list-style: none;
  margin: ${(p) => (p.$nested ? "0 0 1px 3px" : "0")};
  padding: ${(p) => (p.$nested ? (p.$deep ? "0 0 0 7px" : "0 0 0 7px") : "0 0 0 1px")};
  border-left: ${(p) => (p.$nested ? "1px dotted #ccc" : "0")};
`;

const TreeRow = styled.div`
  display: flex;
  align-items: center;
  height: 11px;
`;

const Dash = styled.span`
  width: ${(p) => (p.$short ? 3 : 7)}px;
  border-top: 1px dotted #bbb;
`;

const TreeLabel = styled.span`
  margin-left: 3px;
  background: ${(p) => (p.$active ? "#ddd" : "none")};
  font-weight: ${(p) => (p.$active ? 700 : 400)};
`;

const StatusBar = styled.footer`
  display: flex;
  align-items: center;
  justify-content: space-between;
  height: 13px;
  border-top: 1px solid #bbb;
  background: #d0d0d0;
  white-space: nowrap;
`;

const StatusIcons = styled.div`
  display: flex;
  align-items: center;
  gap: 5px;
  margin-right: 45px;
`;

const Count = styled.span`
  display: flex;
  align-items: center;
`;

const ImeBar = styled.div`
  position: absolute;
  right: 10px;
  bottom: 67px;
  display: flex;
  align-items: center;
  justify-content: space-between;
  width: 116px;
  height: 14px;
  padding-right: 3px;
  border: 1px solid #dde3ea;
  background: #fff;
  color: #1f78c8;
  font-size: 9px;
  font-weight: 700;
`;

const ImeLogo = styled.svg`
  width: 15px;
  height: 15px;
`;

const Meter = styled.div`
  position: absolute;
  right: 40px;
  bottom: 9px;
  display: flex;
  align-items: center;
`;

const Rates = styled.div`
  width: 40px;
  height: 24px;
  margin-right: -8px;
  padding: 2px 0 2px 8px;
  border-radius: 12px 0 0 12px;
  background: #fff;
  box-shadow: 0 0 3px #ccc;
  color: #888;
  font-size: 6px;
  line-height: 10px;
`;

const Rate = styled.div`
  display: flex;
  gap: 2px;

  b {
    color: ${(p) => p.$color};
  }
  i {
    margin-left: 2px;
    font-style: normal;
  }
`;

const Dial = styled.div`
  position: relative;
  display: flex;
  align-items: baseline;
  justify-content: center;
  width: 32px;
  height: 32px;
  border-radius: 50%;
  background: #fff;
  box-shadow: 0 0 3px #bbb;
  color: #222;
  font-size: 13px;
  line-height: 32px;

  small {
    font-size: 6px;
  }
`;

const DialRing = styled.svg`
  position: absolute;
  inset: 0;
`;
